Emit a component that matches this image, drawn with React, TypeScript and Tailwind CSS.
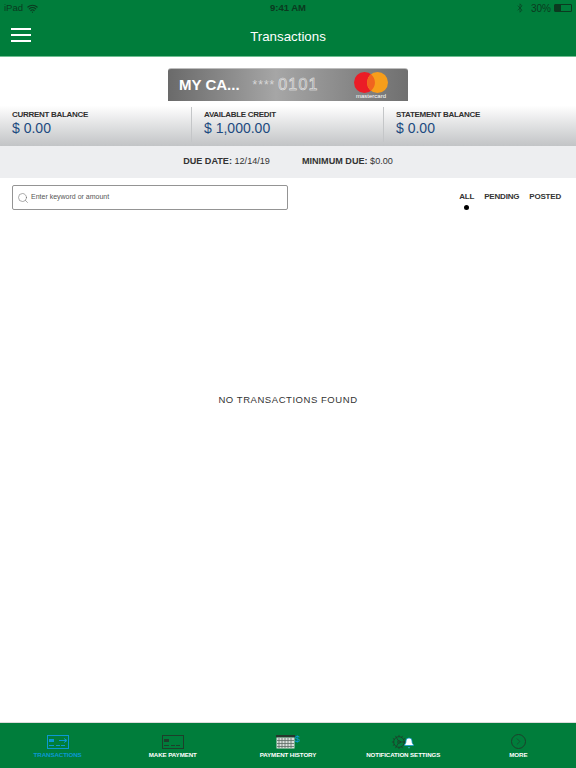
import React from 'react';
import { Bluetooth, ChevronRight, Search, Cog, Bell, Wifi } from 'lucide-react';

const sans = { fontFamily: '"Liberation Sans", Arial, sans-serif' };

const CardIcon: React.FC<{ color: string; accent: string; arrow?: boolean }> = ({ color, accent, arrow }) => (
  <svg width="22" height="14" viewBox="0 0 22 14" fill="none">
    <rect x="0.5" y="0.5" width="21" height="13" stroke={color} />
    <rect x="2" y="4" width="5" height="3" fill={accent} />
    {arrow && <path d="M12 5.5h7M17 3.5l3 2-3 2" stroke={accent} />}
    <path d="M2 10.5h5M9 10.5h4M14 10.5h4" stroke={accent} />
  </svg>
);

const HistoryIcon: React.FC = () => (
  <svg width="24" height="14" viewBox="0 0 24 14" fill="none">
    <rect x="0" y="0" width="19" height="2.5" fill="#26352c" />
    <rect x="0.5" y="2.5" width="18" height="11" fill="#d8dedb" />
    <path d="M3 3v10M6 3v10M9 3v10M12 3v10M15 3v10M1 5.5h17M1 8.5h17M1 11.5h17" stroke="#5d6b64" strokeWidth="0.8" />
    <text x="19" y="7" fontSize="9" fill="#0d9ad6" fontFamily="Liberation Sans">$</text>
  </svg>
);

const tabs = [
  { label: 'TRANSACTIONS', active: true, icon: <CardIcon color="#0b98d4" accent="#0b98d4" arrow /> },
  { label: 'MAKE PAYMENT', icon: <CardIcon color="#1d3f2b" accent="#1d3f2b" /> },
  { label: 'PAYMENT HISTORY', icon: <HistoryIcon /> },
  {
    label: 'NOTIFICATION SETTINGS',
    icon: (
      <span className="flex items-center">
        <Cog size={16} strokeWidth={1.3} className="text-[#1d3f2b]" />
        <Bell size={12} fill="#ffffff" strokeWidth={1.5} className="-ml-[4px] mt-[3px] text-[#0b98d4]" />
      </span>
    ),
  },
  {
    label: 'MORE',
    icon: (
      <span className="flex h-[15px] w-[15px] items-center justify-center rounded-full border border-[#1d3f2b]">
        <ChevronRight size={11} strokeWidth={1.5} className="text-[#1d3f2b]" />
      </span>
    ),
  },
];

const balances = [
  { label: 'CURRENT BALANCE', value: '$ 0.00' },
  { label: 'AVAILABLE CREDIT', value: '$ 1,000.00' },
  { label: 'STATEMENT BALANCE', value: '$ 0.00' },
];

export default function App() {
  return (
    <div className="flex h-[768px] w-[576px] flex-col overflow-hidden bg-white" style={sans}>
      <header className="h-[57px] shrink-0 border-b border-[#6fbf92] bg-[#007d3b] text-white">
        <div className="grid h-4 grid-cols-3 items-center px-1 text-[9.5px] text-[#0b3a20]">
          <div className="flex items-center gap-1">
            <span>iPad</span>
            <Wifi size={11} strokeWidth={2.5} />
          </div>
          <span className="text-center text-[9.5px] font-bold">9:41 AM</span>
          <div className="flex items-center justify-end gap-[3px]">
            <Bluetooth size={10} strokeWidth={1.5} className="mr-[3px]" />
            <span className="text-[10px]">30%</span>
            <span className="flex h-[8px] w-[18px] items-stretch rounded-[1px] border border-[#0b3a20]">
              <span className="w-[6px] bg-[#0b3a20]" />
            </span>
          </div>
        </div>
        <div className="relative flex h-10 items-center justify-center pt-[1px]">
          <div className="absolute left-[11px] top-[12px] flex w-5 flex-col gap-[4px]">
            <span className="h-[2px] bg-white" />
            <span className="h-[2px] bg-white" />
            <span className="h-[2px] bg-white" />
          </div>
          <span className="text-[13.3px]">Transactions</span>
        </div>
      </header>

      <div className="flex justify-center pt-[11px]">
        <div className="relative flex h-[33px] w-[240px] items-center rounded-t-[3px] border-t border-[#bdbdbd] bg-gradient-to-r from-[#6a6a6a] via-[#a6a6a6] via-45% to-[#707070]">
          <span className="ml-[11px] text-[15px] font-bold text-white">MY CA...</span>
          <span className="ml-[13px] text-[12px] tracking-[1px] text-[#d8d8d8]">****</span>
          <span className="ml-[3px] text-[16px] tracking-[1.2px] text-transparent [-webkit-text-stroke:0.5px_#f0f0f0]">0101</span>
          <div className="absolute right-[20px] top-[3px] flex flex-col items-center">
            <svg width="34" height="21" viewBox="0 0 34 21">
              <circle cx="10.5" cy="10.5" r="10.5" fill="#eb1c26" />
              <circle cx="23.5" cy="10.5" r="10.5" fill="#f79e1b" />
              <path d="M17 2.3a10.5 10.5 0 0 1 0 16.4a10.5 10.5 0 0 1 0-16.4z" fill="#f0641f" />
            </svg>
            <span className="text-[6px] leading-[6px] text-white">mastercard</span>
          </div>
        </div>
      </div>

      <section className="grid h-[45px] grid-cols-[191px_192px_193px] bg-gradient-to-b from-white from-10% to-[#c2c4c6]">
        {balances.map((b, i) => (
          <div key={b.label} className={i > 0 ? 'mt-[6px] h-[35px] border-l border-[#c4c6c8] pl-3 pt-[2px]' : 'mt-[6px] h-[35px] pl-3 pt-[2px]'}>
            <div className="text-[8px] font-bold leading-[11px] tracking-[-0.3px] text-[#2f2f2f]">{b.label}</div>
            <div className="text-[14px] leading-[17px] text-[#1c4a80]">{b.value}</div>
          </div>
        ))}
      </section>

      <div className="flex h-[32px] items-center justify-center gap-8 bg-[#edeef0] text-[9.1px] text-[#333]">
        <span><b>DUE DATE:</b> 12/14/19</span>
        <span><b>MINIMUM DUE:</b> $0.00</span>
      </div>

      <div className="flex items-start justify-between pl-3 pr-[15px] pt-[7px]">
        <div className="flex h-[25px] w-[276px] items-center gap-[2px] rounded-[2px] border border-[#949494] pl-1 text-[7px] text-[#555]">
          <Search size={12} strokeWidth={1.1} className="text-[#666]" />
          Enter keyword or amount
        </div>
        <div className="flex gap-[10px] pt-[7px] text-[8px] font-bold leading-[10px] tracking-[-0.2px] text-[#333]">
          <div className="flex flex-col items-center">
            ALL
            <span className="mt-[3px] h-[5px] w-[5px] rounded-full bg-black" />
          </div>
          <span>PENDING</span>
          <span>POSTED</span>
        </div>
      </div>

      <main className="flex flex-1 justify-center pt-[183px] text-[9.5px] leading-[14px] tracking-[0.55px] text-[#333]">
        NO TRANSACTIONS FOUND
      </main>

      <nav className="grid h-[46px] shrink-0 grid-cols-5 border-t border-[#dcdcdc] bg-[#007d3b]">
        {tabs.map((t) => (
          <div key={t.label} className="flex flex-col items-center pt-[11px]">
            <div className="flex h-[15px] items-center">{t.icon}</div>
            <span className={`mt-[1px] text-[6.2px] font-bold leading-[10px] tracking-[-0.1px] ${t.active ? 'text-[#0b98d4]' : 'text-white'}`}>
              {t.label}
            </span>
          </div>
        ))}
      </nav>
    </div>
  );
}
